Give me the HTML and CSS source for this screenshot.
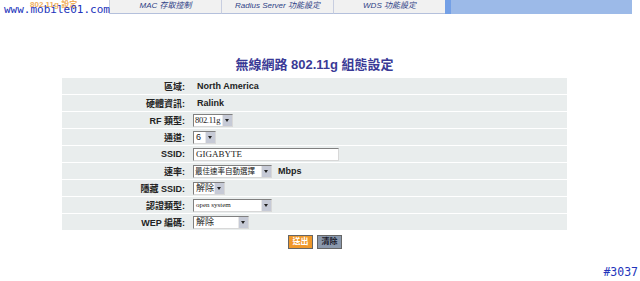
FILE: index.html
```html
<!DOCTYPE html>
<html lang="zh-Hant">
<head>
  <meta charset="UTF-8">
  <meta name="viewport" content="width=device-width, initial-scale=1.0">
  <title>無線網路 802.11g 組態設定</title>
  <link rel="stylesheet" href="styles.css">
</head>
<body>
  <div class="topbar">
    <div class="tab-current">802.11g 設定</div>
    <div class="tab">MAC 存取控制</div>
    <div class="tab">Radius Server 功能設定</div>
    <div class="tab">WDS 功能設定</div>
    <div class="tab-fill"></div>
    <div class="tab-end"></div>
  </div>
  <div class="watermark">www.mobile01.com</div>

  <div class="container">
    <h1>無線網路 802.11g 組態設定</h1>
    <div class="form">
      <div class="label">區域:</div>
      <div class="value"><b>North America</b></div>

      <div class="label">硬體資訊:</div>
      <div class="value"><b>Ralink</b></div>

      <div class="label">RF 類型:</div>
      <div class="value">
        <span class="select w-rf"><span class="sel-text serif narrow">802.11g</span><span class="sel-arrow"></span></span>
      </div>

      <div class="label">通道:</div>
      <div class="value">
        <span class="select w-ch"><span class="sel-text">6</span><span class="sel-arrow"></span></span>
      </div>

      <div class="label">SSID:</div>
      <div class="value">
        <span class="textbox serif">GIGABYTE</span>
      </div>

      <div class="label">速率:</div>
      <div class="value">
        <span class="select w-rate"><span class="sel-text small">最佳速率自動選擇</span><span class="sel-arrow"></span></span>
        <b class="unit">Mbps</b>
      </div>

      <div class="label">隱藏 SSID:</div>
      <div class="value">
        <span class="select w-hide"><span class="sel-text">解除</span><span class="sel-arrow"></span></span>
      </div>

      <div class="label">認證類型:</div>
      <div class="value">
        <span class="select w-auth"><span class="sel-text tiny serif">open system</span><span class="sel-arrow"></span></span>
      </div>

      <div class="label">WEP 編碼:</div>
      <div class="value">
        <span class="select w-wep"><span class="sel-text">解除</span><span class="sel-arrow"></span></span>
      </div>
    </div>
    <div class="buttons">
      <button class="btn btn-submit">送出</button>
      <button class="btn btn-clear">清除</button>
    </div>
  </div>

  <div class="page-id">#3037</div>
</body>
</html>
```

FILE: styles.css
```css
body {
  margin: 0;
  width: 640px;
  height: 281px;
  font-family: "Liberation Sans", "Noto Sans CJK TC", sans-serif;
  background: #fff;
  position: relative;
  overflow: hidden;
}

.topbar {
  display: flex;
  height: 14px;
}

.tab-current {
  width: 109px;
  color: #f0b060;
  font-size: 8px;
  font-weight: bold;
  padding-left: 30px;
  box-sizing: border-box;
  line-height: 10px;
}

.tab {
  width: 112px;
  box-sizing: border-box;
  background: #f1f1f1;
  border-left: 1px solid #c8cee0;
  border-bottom: 1px solid #b4c0dc;
  color: #2f3f86;
  font-size: 8px;
  font-style: italic;
  text-align: center;
  line-height: 12px;
}

.tab-fill {
  width: 187px;
  background: #9cbae8;
  border-left: 6px solid #74a0e6;
  box-sizing: border-box;
}

.tab-end {
  flex: 1;
}

.watermark {
  position: absolute;
  left: 4px;
  top: 3px;
  font-family: "DejaVu Sans Mono", monospace;
  font-size: 11px;
  color: #2233bb;
}

.container {
  width: 505px;
  margin-left: 62px;
}

h1 {
  margin: 43px 0 5px;
  text-align: center;
  font-size: 13px;
  color: #3a3a96;
  line-height: 16px;
}

.form {
  display: grid;
  grid-template-columns: 127px 1fr;
  row-gap: 1px;
  font-size: 9px;
  color: #222;
}

.label,
.value {
  background: #e9eded;
  height: 16px;
  display: flex;
  align-items: center;
}

.label {
  justify-content: flex-end;
  font-weight: bold;
  padding-right: 4px;
}

.value {
  padding-left: 4px;
}

.value b {
  padding-left: 4px;
}

.unit {
  padding-left: 0;
}

.serif {
  font-family: "Liberation Serif", "Noto Sans CJK TC", serif;
}

.select {
  display: inline-flex;
  height: 13px;
  box-sizing: border-box;
  border: 1px solid #808080;
  border-right-color: #d8d8d8;
  border-bottom-color: #d8d8d8;
  background: #fff;
  margin-right: 2px;
}

.sel-text {
  flex: 1;
  font-size: 9px;
  line-height: 11px;
  padding-left: 2px;
  white-space: nowrap;
  overflow: hidden;
}

.sel-text.narrow {
  font-size: 8.5px;
  letter-spacing: -0.3px;
  padding-left: 1px;
}

.sel-text.small {
  font-size: 7.5px;
  padding-left: 1px;
}

.sel-text.tiny {
  font-size: 7px;
}

.sel-arrow {
  width: 9px;
  flex: none;
  background: #c6cad6;
  border-left: 1px solid #e8e8e8;
  position: relative;
}

.sel-arrow::after {
  content: "";
  position: absolute;
  left: 2px;
  top: 4px;
  border-left: 2.5px solid transparent;
  border-right: 2.5px solid transparent;
  border-top: 3px solid #222;
}

.w-rf { width: 40px; }
.w-ch { width: 23px; }
.w-rate { width: 79px; }
.w-hide { width: 32px; }
.w-auth { width: 79px; }
.w-wep { width: 56px; }

.textbox {
  display: inline-block;
  width: 146px;
  height: 13px;
  box-sizing: border-box;
  border: 1px solid #808080;
  border-right-color: #d8d8d8;
  border-bottom-color: #d8d8d8;
  background: #fff;
  font-size: 9px;
  line-height: 11px;
  padding-left: 2px;
}

.buttons {
  display: flex;
  justify-content: flex-start;
  gap: 4px;
  padding-left: 226px;
  margin-top: 5px;
}

.btn {
  height: 14px;
  width: 25px;
  padding: 0;
  border: 1px solid #666;
  font-family: "Liberation Sans", "Noto Sans CJK TC", sans-serif;
  font-size: 8px;
  font-weight: bold;
  color: #fff;
  line-height: 12px;
}

.btn-submit {
  background: #f0982a;
}

.btn-clear {
  background: #8a98ac;
  color: #1a1a2a;
}

.page-id {
  position: absolute;
  right: 2px;
  top: 265px;
  font-family: "DejaVu Sans Mono", monospace;
  font-size: 11.5px;
  color: #2233bb;
}
```
